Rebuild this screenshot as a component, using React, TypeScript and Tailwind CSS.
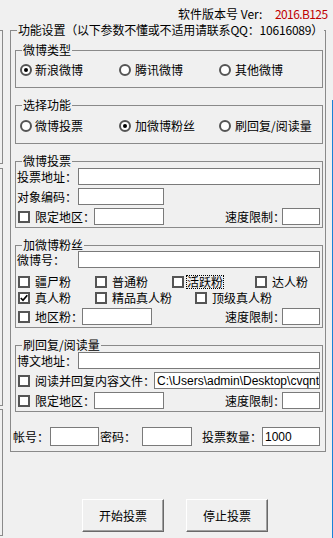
import React from "react";

const Cb = ({ checked }: { checked?: boolean }) => (
  <span className="w-[12px] h-[12px] border-2 border-[#555] bg-white shrink-0 flex items-center justify-center">
    {checked && (
      <svg width="8" height="8" viewBox="0 0 8 8">
        <path d="M0.8 4 L3 6.3 L7.3 1.2" stroke="#000" strokeWidth="1.7" fill="none" />
      </svg>
    )}
  </span>
);

const Radio = ({ checked }: { checked?: boolean }) => (
  <span className="w-[12px] h-[12px] rounded-full border-2 border-[#555] bg-white shrink-0 flex items-center justify-center">
    {checked && <span className="w-[4px] h-[4px] rounded-full bg-black" />}
  </span>
);

const Inp = ({ className, children }: { className: string; children?: React.ReactNode }) => (
  <div
    className={`border border-[#7a7a7a] bg-white shrink-0 overflow-hidden whitespace-nowrap flex items-center pl-[2px] font-['Liberation_Sans',sans-serif] text-[12px] ${className}`}
  >
    {children}
  </div>
);

const Group = ({
  title,
  className,
  children,
}: {
  title: string;
  className: string;
  children?: React.ReactNode;
}) => (
  <div className={`border border-[#8a8a8a] flex flex-col ml-[4px] w-[308px] ${className}`}>
    <span className="-mt-[7px] ml-[6px] px-[1px] bg-[#f0f0f0] self-start h-[12px] leading-[12px] whitespace-nowrap">
      {title}
    </span>
    {children}
  </div>
);

const L = ({ className, children }: { className: string; children: React.ReactNode }) => (
  <span className={`shrink-0 whitespace-nowrap leading-[12px] ${className}`}>{children}</span>
);

export default function App() {
  return (
    <div className="w-[333px] h-[538px] bg-[#f0f0f0] flex overflow-hidden font-['Noto_Sans_CJK_SC',sans-serif] text-[12px] leading-[12px] text-black">
      {/* left sliver of neighbouring panels */}
      <div className="w-[3px] shrink-0 flex flex-col pt-[30px]">
        <div className="h-[134px] border-t border-r border-b border-[#8a8a8a]" />
        <div className="mt-[4px] h-[238px] border-t border-r border-b border-[#8a8a8a]" />
        <div className="mt-[3px] h-[127px] border-t border-r border-b border-[#8a8a8a]" />
      </div>

      {/* main column */}
      <div className="w-[329px] shrink-0 flex flex-col">
        <div className="h-[30px] pt-[8px] pl-[175px] flex">
          <span className="w-[97px] shrink-0 whitespace-nowrap">软件版本号 Ver:</span>
          <span className="text-[#c00000] whitespace-nowrap tracking-[-0.6px]">2016.B125</span>
        </div>

        <div className="ml-[7px] w-[316px] h-[422px] border border-[#8a8a8a] flex flex-col">
          <span className="-mt-[7px] ml-[6px] px-[1px] bg-[#f0f0f0] self-start h-[12px] leading-[12px] whitespace-nowrap tracking-[-0.2px]">
            功能设置（以下参数不懂或不适用请联系QQ：10616089）
          </span>

          {/* 微博类型 */}
          <Group title="微博类型" className="mt-[14px] h-[38px]">
            <div className="mt-[8px] h-[12px] flex items-center pl-[4px]">
              <div className="w-[99px] flex items-center gap-[3px]">
                <Radio checked />
                <L className="">新浪微博</L>
              </div>
              <div className="w-[100px] flex items-center gap-[4px]">
                <Radio />
                <L className="">腾讯微博</L>
              </div>
              <div className="flex items-center gap-[4px]">
                <Radio />
                <L className="">其他微博</L>
              </div>
            </div>
          </Group>

          {/* 选择功能 */}
          <Group title="选择功能" className="mt-[17px] h-[39px]">
            <div className="mt-[9px] h-[12px] flex items-center pl-[4px]">
              <div className="w-[99px] flex items-center gap-[3px]">
                <Radio />
                <L className="">微博投票</L>
              </div>
              <div className="w-[100px] flex items-center gap-[4px]">
                <Radio checked />
                <L className="">加微博粉丝</L>
              </div>
              <div className="flex items-center gap-[4px]">
                <Radio />
                <L className="">刷回复/阅读量</L>
              </div>
            </div>
          </Group>

          {/* 微博投票 */}
          <Group title="微博投票" className="mt-[17px] h-[67px]">
            <div className="mt-[1px] h-[17px] flex items-center pl-[1px]">
              <L className="w-[61px]">投票地址：</L>
              <Inp className="w-[242px] h-[17px]" />
            </div>
            <div className="mt-[3px] h-[17px] flex items-center pl-[1px]">
              <L className="w-[61px]">对象编码：</L>
              <Inp className="w-[86px] h-[17px]" />
            </div>
            <div className="mt-[3px] h-[17px] flex items-center pl-[2px]">
              <Cb />
              <L className="ml-[5px] w-[59px]">限定地区：</L>
              <Inp className="w-[70px] h-[17px]" />
              <L className="ml-[61px] w-[57px]">速度限制：</L>
              <Inp className="w-[38px] h-[17px]" />
            </div>
          </Group>

          {/* 加微博粉丝 */}
          <Group title="加微博粉丝" className="mt-[17px] h-[83px]">
            <div className="h-[17px] flex items-center pl-[1px]">
              <L className="w-[61px]">微博号：</L>
              <Inp className="w-[242px] h-[17px]" />
            </div>
            <div className="mt-[6px] h-[16px] flex items-center pl-[2px]">
              <div className="w-[77px] flex items-center gap-[5px]">
                <Cb />
                <L className="">疆尸粉</L>
              </div>
              <div className="w-[77px] flex items-center gap-[5px]">
                <Cb />
                <L className="">普通粉</L>
              </div>
              <div className="w-[83px] flex items-center gap-[2px]">
                <Cb />
                <span className="border border-dotted border-black leading-[12px] whitespace-nowrap">活跃粉</span>
              </div>
              <div className="flex items-center gap-[5px]">
                <Cb />
                <L className="">达人粉</L>
              </div>
            </div>
            <div className="h-[16px] flex items-center pl-[2px]">
              <div className="w-[77px] flex items-center gap-[5px]">
                <Cb checked />
                <L className="">真人粉</L>
              </div>
              <div className="w-[100px] flex items-center gap-[5px]">
                <Cb />
                <L className="">精品真人粉</L>
              </div>
              <div className="flex items-center gap-[5px]">
                <Cb />
                <L className="">顶级真人粉</L>
              </div>
            </div>
            <div className="mt-[2px] h-[17px] flex items-center pl-[2px]">
              <Cb />
              <L className="ml-[5px] w-[47px]">地区粉：</L>
              <Inp className="w-[70px] h-[17px]" />
              <L className="ml-[73px] w-[57px]">速度限制：</L>
              <Inp className="w-[38px] h-[17px]" />
            </div>
          </Group>

          {/* 刷回复/阅读量 */}
          <Group title="刷回复/阅读量" className="mt-[17px] h-[67px]">
            <div className="mt-[1px] h-[17px] flex items-center pl-[1px]">
              <L className="w-[61px]">博文地址：</L>
              <Inp className="w-[242px] h-[17px]" />
            </div>
            <div className="mt-[3px] h-[17px] flex items-center pl-[2px]">
              <Cb />
              <L className="ml-[5px] w-[119px]">阅读并回复内容文件：</L>
              <Inp className="w-[166px] h-[17px]">{"C:\\Users\\admin\\Desktop\\cvqntyz"}</Inp>
            </div>
            <div className="mt-[3px] h-[17px] flex items-center pl-[2px]">
              <Cb />
              <L className="ml-[5px] w-[59px]">限定地区：</L>
              <Inp className="w-[70px] h-[17px]" />
              <L className="ml-[61px] w-[57px]">速度限制：</L>
              <Inp className="w-[38px] h-[17px]" />
            </div>
          </Group>

          {/* 帐号 row */}
          <div className="mt-[15px] h-[19px] flex items-center pl-[2px]">
            <L className="w-[37px]">帐号：</L>
            <Inp className="w-[49px] h-[19px]" />
            <L className="ml-[1px] w-[42px]">密码：</L>
            <Inp className="w-[50px] h-[19px]" />
            <L className="ml-[10px] w-[60px]">投票数量：</L>
            <Inp className="w-[58px] h-[19px]">1000</Inp>
          </div>
        </div>

        <div className="mt-[47px] flex pl-[79px] gap-[22px]">
          <button className="w-[82px] h-[33px] bg-[#f0f0f0] border border-t-white border-l-white border-r-[#696969] border-b-[#696969] shadow-[inset_-1px_-1px_0_#a0a0a0] text-[12px] leading-[12px]">
            开始投票
          </button>
          <button className="w-[82px] h-[33px] bg-[#f0f0f0] border border-t-white border-l-white border-r-[#696969] border-b-[#696969] shadow-[inset_-1px_-1px_0_#a0a0a0] text-[12px] leading-[12px]">
            停止投票
          </button>
        </div>
      </div>

      {/* window edge */}
      <div className="w-[1px] shrink-0 flex flex-col">
        <div className="h-[100px]" />
        <div className="flex-1 bg-[#1883d7]" />
      </div>
    </div>
  );
}
